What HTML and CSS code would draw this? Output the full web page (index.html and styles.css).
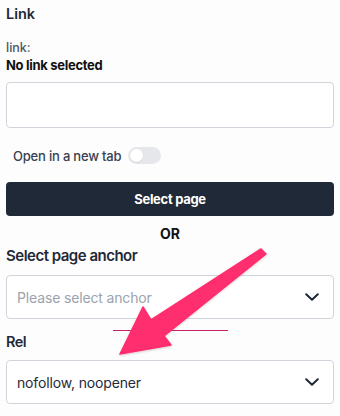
FILE: index.html
```html
<!DOCTYPE html>
<html lang="en">
<head>
<meta charset="utf-8">
<title>Link settings</title>
<link rel="stylesheet" href="styles.css">
</head>
<body>
<div class="panel">
  <h2 class="title">Link</h2>
  <div class="meta-label">link:</div>
  <div class="meta-value">No link selected</div>
  <div class="text-input"></div>
  <div class="toggle-row">
    <span class="toggle-label">Open in a new tab</span>
    <span class="toggle"><span class="knob"></span></span>
  </div>
  <button class="primary-btn">Select page</button>
  <div class="or">OR</div>
  <div class="field-label">Select page anchor</div>
  <div class="select">
    <span class="placeholder">Please select anchor</span>
    <svg class="chev" width="14" height="8" viewBox="0 0 14 8"><path d="M1.2 1.2 L7 6.8 L12.8 1.2" fill="none" stroke="#1f2937" stroke-width="2" stroke-linecap="round" stroke-linejoin="round"/></svg>
  </div>
  <div class="field-label rel">Rel</div>
  <div class="select select-rel">
    <span class="value">nofollow, noopener</span>
    <svg class="chev" width="14" height="8" viewBox="0 0 14 8"><path d="M1.2 1.2 L7 6.8 L12.8 1.2" fill="none" stroke="#1f2937" stroke-width="2" stroke-linecap="round" stroke-linejoin="round"/></svg>
  </div>
</div>
<svg class="annotation" width="340" height="416" viewBox="0 0 340 416">
  <defs>
    <filter id="sh" x="-20%" y="-20%" width="140%" height="140%">
      <feDropShadow dx="0" dy="1" stdDeviation="1" flood-color="#000" flood-opacity="0.18"/>
    </filter>
  </defs>
  <line x1="113" y1="330.5" x2="228" y2="330.5" stroke="#c8246a" stroke-width="1.2"/>
  <polygon filter="url(#sh)" points="120,354 143,307 151,320 261,249 266,254 164,336 171,345" fill="#ff2d6e" stroke="#ff2d6e" stroke-width="1.5" stroke-linejoin="round"/>
</svg>
</body>
</html>
```
FILE: styles.css
```css
* { box-sizing: border-box; }
html, body {
  margin: 0;
  padding: 0;
  background: #fdfdfd;
}
body {
  font-family: Inter, "Noto Sans", "Liberation Sans", sans-serif;
  color: #1f2937;
  width: 340px;
  height: 416px;
  position: relative;
  overflow: hidden;
}
.panel {
  padding: 0 6px;
  display: flex;
  flex-direction: column;
}
.title {
  margin: 4px 0 0;
  font-size: 14.5px;
  line-height: 20px;
  font-weight: 600;
  color: #1f2937;
}
.meta-label {
  margin-top: 15px;
  font-size: 12.5px;
  line-height: 17px;
  font-weight: 500;
  color: #4b5563;
}
.meta-value {
  font-size: 13px;
  line-height: 18px;
  font-weight: 700;
  letter-spacing: -0.3px;
  color: #111111;
}
.text-input {
  margin-top: 8px;
  height: 46px;
  background: #ffffff;
  border: 1px solid #d1d5db;
  border-radius: 4px;
}
.toggle-row {
  margin-top: 19px;
  padding-left: 7px;
  display: flex;
  align-items: center;
  gap: 7px;
  height: 17px;
}
.toggle-label {
  font-size: 13px;
  font-weight: 500;
  letter-spacing: -0.2px;
  color: #374151;
}
.toggle {
  width: 33px;
  height: 17px;
  border-radius: 9px;
  background: #e5e7eb;
  display: flex;
  align-items: center;
  padding: 2px;
}
.knob {
  width: 13px;
  height: 13px;
  border-radius: 50%;
  background: #ffffff;
  box-shadow: 0 1px 1px rgba(0,0,0,0.08);
}
.primary-btn {
  margin-top: 18px;
  height: 34px;
  border: 0;
  border-radius: 4px;
  background: #1f2937;
  color: #ffffff;
  font-family: inherit;
  font-size: 13px;
  font-weight: 700;
  letter-spacing: -0.3px;
}
.or {
  margin-top: 9px;
  text-align: center;
  font-size: 14px;
  line-height: 18px;
  font-weight: 700;
  color: #111111;
}
.field-label {
  margin-top: 3px;
  font-size: 15px;
  line-height: 20px;
  font-weight: 600;
  letter-spacing: -0.5px;
  color: #1f2937;
}
.field-label.rel {
  margin-top: 13px;
  font-size: 14.5px;
}
.select {
  margin-top: 9px;
  height: 44px;
  background: #ffffff;
  border: 1px solid #d1d5db;
  border-radius: 4px;
  display: flex;
  align-items: center;
  justify-content: space-between;
  padding: 0 14px 0 10px;
  font-size: 14px;
  letter-spacing: -0.15px;
}
.select-rel {
  margin-top: 8px;
}
.placeholder { color: #9ca3af; }
.value { color: #1f2937; }
.chev { display: block; }
.annotation {
  position: absolute;
  top: 0;
  left: 0;
  pointer-events: none;
}
```
